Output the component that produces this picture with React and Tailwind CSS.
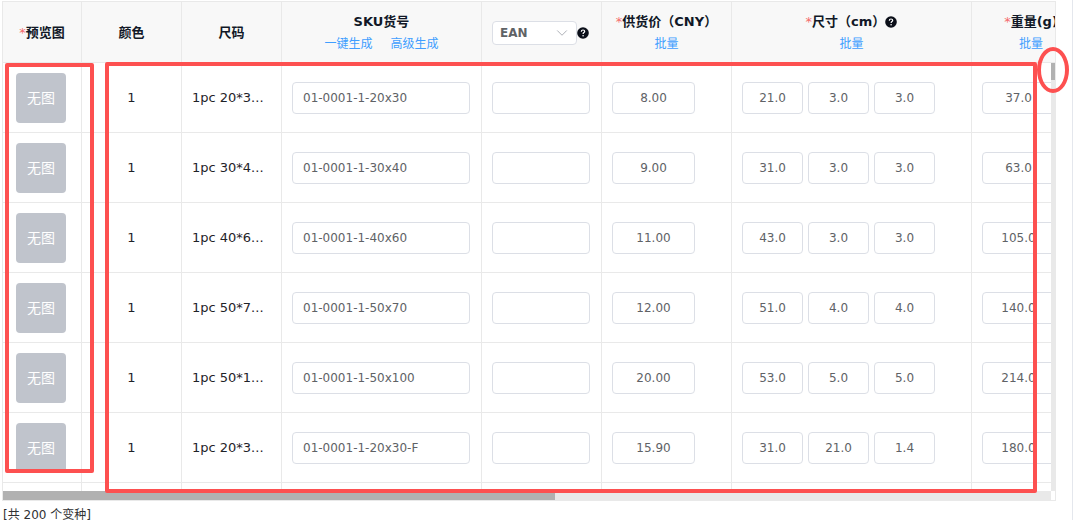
import { useState } from 'react';
import { ChevronDown } from 'lucide-react';

const initialRows = [
    { id: 1, color: '1', size: '1pc 20*3...', sku: '01-0001-1-20x30', price: '8.00', dims: ['21.0', '3.0', '3.0'], weight: '37.0' },
    { id: 2, color: '1', size: '1pc 30*4...', sku: '01-0001-1-30x40', price: '9.00', dims: ['31.0', '3.0', '3.0'], weight: '63.0' },
    { id: 3, color: '1', size: '1pc 40*6...', sku: '01-0001-1-40x60', price: '11.00', dims: ['43.0', '3.0', '3.0'], weight: '105.0' },
    { id: 4, color: '1', size: '1pc 50*7...', sku: '01-0001-1-50x70', price: '12.00', dims: ['51.0', '4.0', '4.0'], weight: '140.0' },
    { id: 5, color: '1', size: '1pc 50*1...', sku: '01-0001-1-50x100', price: '20.00', dims: ['53.0', '5.0', '5.0'], weight: '214.0' },
    { id: 6, color: '1', size: '1pc 20*3...', sku: '01-0001-1-20x30-F', price: '15.90', dims: ['31.0', '21.0', '1.4'], weight: '180.0' },
];

const thClass = 'h-[61px] p-0 pt-0.5 border-r border-b border-[#e9e9e9] bg-[#f8f8f8] text-[13px] leading-[22px] font-bold text-[#111827] whitespace-nowrap text-center align-middle';
const tdClass = 'h-[70px] py-0 border-r border-b border-[#e9e9e9] align-middle';
const inputClass = 'block h-8 min-w-0 rounded border border-[#dcdfe6] bg-white text-xs text-[#606266] outline-none focus:border-[#409eff]';

function Required() {
    return <span className="font-normal text-[#f56c6c]">*</span>;
}

function LinkButton({ children }) {
    return <button type="button" className="text-xs leading-[22px] font-normal text-[#409eff]">{children}</button>;
}

function HelpIcon() {
    return (
        <svg viewBox="0 0 12 12" className="size-3 shrink-0" aria-hidden="true">
            <circle cx="6" cy="6" r="5.8" fill="#0b0f19" />
            <path d="M4.300 4.700C4.300 3.500 5 3 6 3s1.700.6 1.700 1.500C7.700 5.600 6.100 5.600 6.100 6.900" fill="none" stroke="#fff" strokeWidth="1.200" />
            <circle cx="6.100" cy="8.700" r=".8" fill="#fff" />
        </svg>
    );
}

export default function App() {
    const [rows, setRows] = useState(initialRows);
    const [codeType, setCodeType] = useState('EAN');

    const handleChange = (id, field, value) => {
        setRows(rows.map(row => (row.id === id ? { ...row, [field]: value } : row)));
    };

    const handleDimChange = (row, index, value) => {
        handleChange(row.id, 'dims', row.dims.map((d, i) => (i === index ? value : d)));
    };

    return (
        <div className="relative min-h-screen bg-white border-r border-[#e4e7ed] pt-px pl-[2px] pr-4 font-['DejaVu_Sans','Noto_Sans_CJK_SC',sans-serif]">
            <div className="relative border border-[#e9e9e9]">
                <div className="h-[489px] overflow-hidden">
                    <table className="w-[1088px] table-fixed border-separate border-spacing-0">
                        <colgroup>
                            <col className="w-[79px]" />
                            <col className="w-[100px]" />
                            <col className="w-[100px]" />
                            <col className="w-[200px]" />
                            <col className="w-[120px]" />
                            <col className="w-[130px]" />
                            <col className="w-[240px]" />
                            <col />
                        </colgroup>
                        <thead>
                            <tr>
                                <th className={thClass}><Required />预览图</th>
                                <th className={thClass}>颜色</th>
                                <th className={thClass}>尺码</th>
                                <th className={thClass}>
                                    <div>SKU货号</div>
                                    <div className="flex justify-center gap-[18px]">
                                        <LinkButton>一键生成</LinkButton>
                                        <LinkButton>高级生成</LinkButton>
                                    </div>
                                </th>
                                <th className={thClass}>
                                    <div className="flex items-center pl-2.5">
                                        <div className="relative w-[85px]">
                                            <select
                                                aria-label="编码类型"
                                                value={codeType}
                                                onChange={e => setCodeType(e.target.value)}
                                                className="block h-6 w-full appearance-none rounded border border-[#dcdfe6] bg-white pl-[7px] text-xs font-bold text-[#606266] outline-none"
                                            >
                                                <option>EAN</option>
                                                <option>UPC</option>
                                            </select>
                                            <ChevronDown size={18} strokeWidth={1.25} className="pointer-events-none absolute top-[3px] right-1.5 text-[#a8abb2]" />
                                        </div>
                                        <HelpIcon />
                                    </div>
                                </th>
                                <th className={thClass}>
                                    <div><Required />供货价（CNY）</div>
                                    <LinkButton>批量</LinkButton>
                                </th>
                                <th className={thClass}>
                                    <div className="flex items-center justify-center">
                                        <span><Required />尺寸（cm）</span>
                                        <HelpIcon />
                                    </div>
                                    <LinkButton>批量</LinkButton>
                                </th>
                                <th className={thClass}>
                                    <div><Required />重量(g)</div>
                                    <LinkButton>批量</LinkButton>
                                </th>
                            </tr>
                        </thead>
                        <tbody className="text-[13px] text-[#1f2329]">
                            {rows.map(row => (
                                <tr key={row.id}>
                                    <td className={`${tdClass} pl-[13px]`}>
                                        <div className="flex size-[50px] items-center justify-center rounded bg-[#c0c4cc] text-sm text-white">无图</div>
                                    </td>
                                    <td className={`${tdClass} text-center`}>{row.color}</td>
                                    <td className={`${tdClass} px-2.5 whitespace-nowrap`}>{row.size}</td>
                                    <td className={`${tdClass} px-2.5`}>
                                        <input
                                            type="text"
                                            aria-label="SKU货号"
                                            value={row.sku}
                                            onChange={e => handleChange(row.id, 'sku', e.target.value)}
                                            className={`${inputClass} w-[178px] px-2.5`}
                                        />
                                    </td>
                                    <td className={`${tdClass} px-2.5`}>
                                        <input type="text" aria-label={codeType} className={`${inputClass} w-[98px] px-2.5`} />
                                    </td>
                                    <td className={`${tdClass} px-2.5`}>
                                        <input
                                            type="text"
                                            aria-label="供货价"
                                            value={row.price}
                                            onChange={e => handleChange(row.id, 'price', e.target.value)}
                                            className={`${inputClass} w-[83px] text-center`}
                                        />
                                    </td>
                                    <td className={`${tdClass} px-2.5`}>
                                        <div className="flex gap-[5px]">
                                            {row.dims.map((dim, i) => (
                                                <input
                                                    key={i}
                                                    type="text"
                                                    aria-label={`尺寸 ${i + 1}`}
                                                    value={dim}
                                                    onChange={e => handleDimChange(row, i, e.target.value)}
                                                    className={`${inputClass} w-[61px] text-center`}
                                                />
                                            ))}
                                        </div>
                                    </td>
                                    <td className={`${tdClass} px-2.5`}>
                                        <input
                                            type="text"
                                            aria-label="重量"
                                            value={row.weight}
                                            onChange={e => handleChange(row.id, 'weight', e.target.value)}
                                            className={`${inputClass} w-[73px] text-center`}
                                        />
                                    </td>
                                </tr>
                            ))}
                            {/* top of the next row, cut off by the scroll area */}
                            <tr>
                                {Array.from({ length: 8 }, (_, i) => <td key={i} className={tdClass} />)}
                            </tr>
                        </tbody>
                    </table>
                </div>

                {/* Scrollbars */}
                <div className="absolute top-[61px] right-0 bottom-[9px] w-1 bg-[#e9e9e9]">
                    <div className="h-[17px] bg-[#b1b1b1]" />
                </div>
                <div className="mr-1 h-[9px] bg-[#e9e9e9]">
                    <div className="h-full w-10/19 bg-[#b1b1b1]" />
                </div>
            </div>

            <p className="mt-2 pl-px text-xs leading-3 text-[#303133]">[共 200 个变种]</p>

            {/* Highlight marks */}
            <div className="pointer-events-none absolute top-[63px] left-[5px] h-[410px] w-[89px] rounded-xs border-4 border-[#fd5050]" />
            <div className="pointer-events-none absolute top-[62px] right-[35px] left-[105px] h-[431px] rounded-xs border-4 border-[#fd5050]" />
            <div className="pointer-events-none absolute top-[47px] right-[3px] h-[46px] w-8 rounded-[50%] border-4 border-[#fd5050]" />
        </div>
    );
}
